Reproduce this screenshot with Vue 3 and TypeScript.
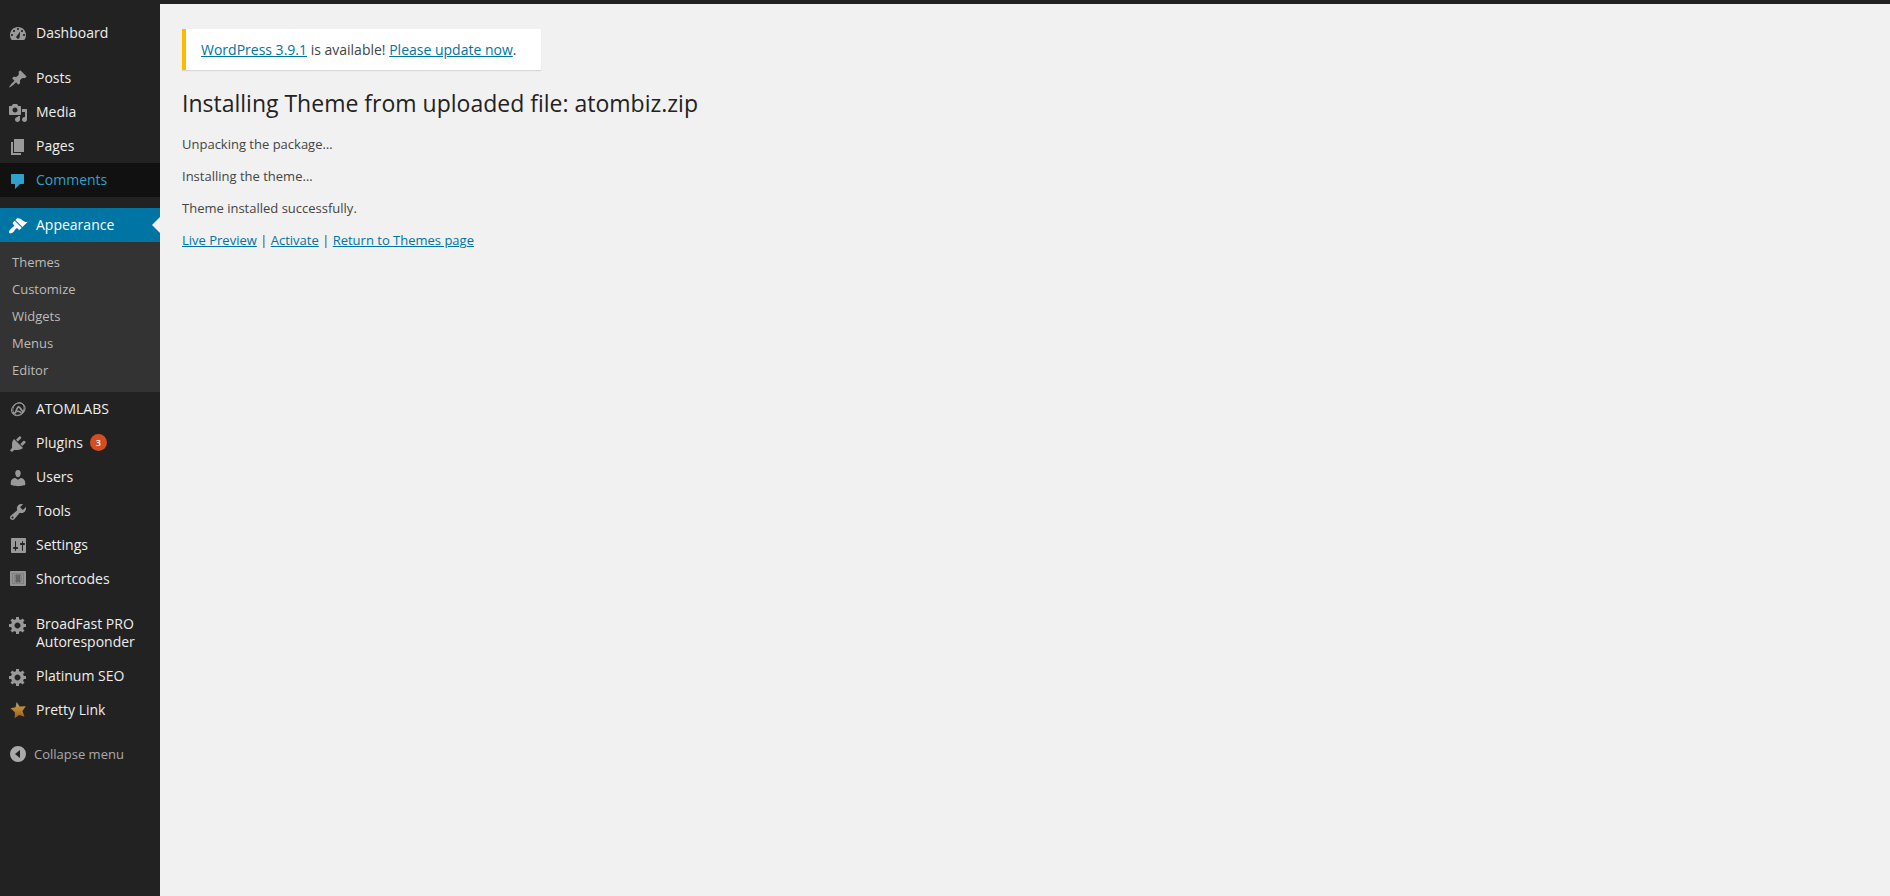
<script setup lang="ts">
interface MenuItem {
  label: string
  icon: string
  state?: 'hover' | 'current'
  badge?: number
  children?: string[]
  gapAfter?: boolean
}

const icons: Record<string, string> = {
  dashboard: 'M3.76 16h12.48c1.1-1.37 1.76-3.11 1.76-5 0-4.42-3.58-8-8-8s-8 3.58-8 8c0 1.89.66 3.63 1.76 5zM10 4c.55 0 1 .45 1 1s-.45 1-1 1-1-.45-1-1 .45-1 1-1zM6 6c.55 0 1 .45 1 1s-.45 1-1 1-1-.45-1-1 .45-1 1-1zm8 0c.55 0 1 .45 1 1s-.45 1-1 1-1-.45-1-1 .45-1 1-1zm-1.8 1.4L11.6 13c0 1-.7 1.8-1.6 1.8s-1.7-.8-1.7-1.7c0-.6.3-1.1.7-1.4zM4 10c.55 0 1 .45 1 1s-.45 1-1 1-1-.45-1-1 .45-1 1-1zm12 0c.55 0 1 .45 1 1s-.45 1-1 1-1-.45-1-1 .45-1 1-1z',
  posts: 'M10.44 3.02l1.82-1.82 6.36 6.35-1.83 1.82c-1.05-.68-2.48-.57-3.41.36l-.75.75c-.92.93-1.04 2.35-.35 3.41l-1.83 1.82-2.41-2.41-2.8 2.79c-.42.42-3.38 2.71-3.8 2.29s1.86-3.39 2.28-3.81l2.79-2.79L4.1 9.36l1.83-1.82c1.05.69 2.48.57 3.4-.36l.75-.75c.93-.92 1.05-2.35.36-3.41z',
  media: 'M13 11V4c0-.55-.45-1-1-1h-1.67L9 1H5L3.67 3H2c-.55 0-1 .45-1 1v7c0 .55.45 1 1 1h10c.55 0 1-.45 1-1zM7 4.5c1.38 0 2.5 1.12 2.5 2.5S8.38 9.5 7 9.5 4.5 8.38 4.5 7 5.62 4.5 7 4.5zM14 6h5v10.5c0 1.38-1.12 2.5-2.5 2.5S14 17.88 14 16.5s1.12-2.5 2.5-2.5c.17 0 .34.02.5.05V9h-3V6zm-4 8.05V13h2v3.5c0 1.38-1.12 2.5-2.5 2.5S7 17.88 7 16.5 8.12 14 9.5 14c.17 0 .34.02.5.05z',
  pages: 'M6 15V2h10v13H6zm-1 1h8v2H3V5h2v11z',
  comments: 'M4 3h11c.6 0 1 .4 1 1v8c0 .6-.4 1-1 1h-3l-5 5v-5H4c-.6 0-1-.4-1-1V4c0-.6.4-1 1-1z',
  appearance: 'M14.48 11.06L7.41 3.99l1.5-1.5c.5-.56 2.3-.47 3.51.32 1.21.8 1.43 1.28 2.91 2.1 1.18.64 2.45 1.26 4.45.85zm-.71.71L6.7 4.7 4.93 6.47c-.39.39-.39 1.02 0 1.41l1.06 1.06c.39.39.39 1.03 0 1.42-.6.6-1.43 1.11-2.21 1.69-.35.26-.7.53-1.01.84C1.43 14.23.4 16.08 1.4 17.07c.99 1 2.84-.03 4.18-1.36.31-.31.58-.66.85-1.02.57-.78 1.08-1.61 1.69-2.21.39-.39 1.02-.39 1.41 0l1.06 1.06c.39.39 1.02.39 1.41 0z',
  plugins: 'M13.11 4.36L9.87 7.6 8 5.73l3.24-3.24c.35-.34 1.05-.2 1.56.32.52.51.66 1.21.31 1.55zm-8 1.77l.91-1.12 9.01 9.01-1.19.84c-.71.71-2.63 1.16-3.82 1.16H6.14L4.9 17.26c-.59.59-1.54.59-2.12 0-.59-.58-.59-1.53 0-2.12l1.24-1.24v-3.88c0-1.13.4-3.19 1.09-3.89zm7.26 3.97l3.24-3.24c.34-.35 1.04-.21 1.55.31.52.51.66 1.21.31 1.55l-3.24 3.25z',
  users: 'M10 9.25c-2.27 0-2.73-3.44-2.73-3.44C7 4.02 7.82 2 9.97 2c2.16 0 2.98 2.02 2.71 3.81 0 0-.41 3.44-2.68 3.44zm0 2.57L12.72 10c2.39 0 4.52 2.33 4.52 4.53v2.49s-3.65 1.13-7.24 1.13c-3.65 0-7.24-1.13-7.24-1.13v-2.49c0-2.25 1.94-4.48 4.47-4.48z',
  tools: 'M16.68 9.77c-1.34 1.34-3.3 1.67-4.95.99l-5.41 6.52c-.99.99-2.59.99-3.58 0s-.99-2.59 0-3.57l6.52-5.42c-.68-1.65-.35-3.61.99-4.95 1.28-1.28 3.12-1.62 4.72-1.06l-2.89 2.89 2.82 2.82 2.86-2.87c.53 1.58.18 3.39-1.08 4.65zM3.81 16.21c.4.39 1.04.39 1.43 0 .4-.4.4-1.04 0-1.43-.39-.4-1.03-.4-1.43 0-.39.39-.39 1.03 0 1.43z',
  settings: 'M18 16V3c0-.55-.45-1-1-1H4c-.55 0-1 .45-1 1v13c0 .55.45 1 1 1h13c.55 0 1-.45 1-1zM8 11h1c.55 0 1 .45 1 1s-.45 1-1 1H8v1.5c0 .28-.22.5-.5.5s-.5-.22-.5-.5V13H6c-.55 0-1-.45-1-1s.45-1 1-1h1V5.5c0-.28.22-.5.5-.5s.5.22.5.5V11zm6-2h-1c-.55 0-1-.45-1-1s.45-1 1-1h1V5.5c0-.28.22-.5.5-.5s.5.22.5.5V7h1c.55 0 1 .45 1 1s-.45 1-1 1h-1v5.5c0 .28-.22.5-.5.5s-.5-.22-.5-.5V9z',
  gear: 'M18 12h-2.18c-.17.7-.44 1.35-.81 1.93l1.54 1.54-2.1 2.1-1.54-1.54c-.58.36-1.23.63-1.91.79V19H8v-2.18c-.68-.16-1.33-.43-1.91-.79l-1.54 1.54-2.12-2.12 1.54-1.54c-.36-.58-.63-1.23-.79-1.91H1V9.03h2.17c.16-.7.44-1.35.8-1.94L2.43 5.55l2.1-2.1 1.54 1.54c.58-.37 1.24-.64 1.93-.81V2h3v2.18c.68.16 1.33.43 1.91.79l1.54-1.54 2.12 2.12-1.54 1.54c.36.59.64 1.24.8 1.94H18V12zm-8.5 1.5c1.66 0 3-1.34 3-3s-1.34-3-3-3-3 1.34-3 3 1.34 3 3 3z',
}

const menu: MenuItem[] = [
  { label: 'Dashboard', icon: 'dashboard', gapAfter: true },
  { label: 'Posts', icon: 'posts' },
  { label: 'Media', icon: 'media' },
  { label: 'Pages', icon: 'pages' },
  { label: 'Comments', icon: 'comments', state: 'hover', gapAfter: true },
  {
    label: 'Appearance',
    icon: 'appearance',
    state: 'current',
    children: ['Themes', 'Customize', 'Widgets', 'Menus', 'Editor'],
  },
  { label: 'ATOMLABS', icon: 'atom' },
  { label: 'Plugins', icon: 'plugins', badge: 3 },
  { label: 'Users', icon: 'users' },
  { label: 'Tools', icon: 'tools' },
  { label: 'Settings', icon: 'settings' },
  { label: 'Shortcodes', icon: 'shortcodes', gapAfter: true },
  { label: 'BroadFast PRO Autoresponder', icon: 'gear' },
  { label: 'Platinum SEO', icon: 'gear' },
  { label: 'Pretty Link', icon: 'star' },
]

const progress: string[] = [
  'Unpacking the package…',
  'Installing the theme…',
  'Theme installed successfully.',
]
</script>

<template>
  <div class="admin">
    <header class="toolbar"></header>
    <div class="body">
      <nav class="sidebar" aria-label="Main menu">
        <ul class="menu">
          <li v-for="item in menu" :key="item.label" :class="['item', item.state, { gap: item.gapAfter }]">
            <a href="#" class="top">
              <svg class="icon" viewBox="0 0 20 20" aria-hidden="true">
                <g v-if="item.icon === 'atom'" fill="none" stroke="currentColor">
                  <ellipse cx="10.3" cy="9.3" rx="7.2" ry="6" transform="rotate(-35 10.3 9.3)" stroke-width="0.9" />
                  <ellipse cx="10.5" cy="9" rx="6.4" ry="5.4" transform="rotate(-60 10.5 9)" stroke-width="0.9" />
                  <path d="M4.2 13.2l3.2-.4C8.600 10 9.200 7 10.600 6.800c1.600 0 2.400 3.400 5 5.600" stroke-width="1.7" />
                  <path d="M8.500 11.600c1.600-.8 3.200-.4 4.800 1.400" stroke-width="1.400" />
                </g>
                <g v-else-if="item.icon === 'shortcodes'">
                  <rect x="2" y="1" width="16" height="15" rx="1" fill="#959595" />
                  <path d="M7.500 3.500h-3v10h3M12.500 3.500h3v10h-3" fill="none" stroke="#7c7c7c" />
                  <path d="M9 3v2H7v7h2v2M11 3v2h2v7h-2v2" fill="none" stroke="#6c6c6c" />
                  <rect x="8" y="5" width="4" height="7" fill="#626262" />
                </g>
                <g v-else-if="item.icon === 'star'">
                  <defs>
                    <linearGradient id="star-fill" x1="0" y1="0" x2="0" y2="1">
                      <stop offset="0" stop-color="#b7a06a" />
                      <stop offset="0.5" stop-color="#b9832f" />
                      <stop offset="1" stop-color="#9a5a10" />
                    </linearGradient>
                  </defs>
                  <path d="M8.700 1l2.900 4.600 6.200-.4-3.300 4.800 2 5.700-5.300-1.800-4.500 3.300.2-6L2.500 7.300l5-1.100z" fill="url(#star-fill)" />
                </g>
                <path v-else :d="icons[item.icon]" fill="currentColor" fill-rule="evenodd" />
              </svg>
              <span class="name">{{ item.label }}<span v-if="item.badge" class="badge">{{ item.badge }}</span></span>
            </a>
            <ul v-if="item.children" class="submenu">
              <li v-for="child in item.children" :key="child">
                <a href="#">{{ child }}</a>
              </li>
            </ul>
          </li>
        </ul>
        <button type="button" class="collapse">
          <svg class="icon" viewBox="0 0 20 20" aria-hidden="true">
            <path d="M10 2a8 8 0 1 0 0 16 8 8 0 0 0 0-16zm2 4v8l-5-4z" fill="currentColor" fill-rule="evenodd" />
          </svg>
          <span>Collapse menu</span>
        </button>
      </nav>
      <main class="content">
        <div class="notice">
          <a href="#">WordPress 3.9.1</a> is available! <a href="#">Please update now</a>.
        </div>
        <h1>Installing Theme from uploaded file: atombiz.zip</h1>
        <p v-for="line in progress" :key="line">{{ line }}</p>
        <p><a href="#">Live Preview</a> | <a href="#">Activate</a> | <a href="#">Return to Themes page</a></p>
      </main>
    </div>
  </div>
</template>

<style>
body {
  margin: 0;
  background: #f1f1f1;
}
</style>

<style scoped>
.admin {
  display: flex;
  flex-direction: column;
  min-height: 100vh;
  font-family: "Open Sans", sans-serif;
  font-size: 13px;
  line-height: 20px;
  color: #444;
}

.toolbar {
  height: 4px;
  background: #222;
}

.body {
  display: flex;
  flex: 1;
}

.sidebar {
  flex: none;
  box-sizing: border-box;
  width: 160px;
  padding-top: 12px;
  background: #222;
}

ul {
  margin: 0;
  padding: 0;
  list-style: none;
}

.item.gap {
  margin-bottom: 11px;
}

.top {
  position: relative;
  display: flex;
  gap: 8px;
  padding: 8px 16px 8px 8px;
  font-size: 14px;
  line-height: 18px;
  color: #eee;
  text-decoration: none;
}

.icon {
  flex: none;
  width: 20px;
  height: 20px;
  margin-bottom: -2px;
  color: #999;
}

.hover .top {
  background: #111;
}

.hover .top,
.hover .icon {
  color: #2ea2cc;
}

.current .top {
  background: #0074a2;
}

.current .top,
.current .icon {
  color: #fff;
}

.current .top::after {
  content: "";
  position: absolute;
  top: 50%;
  right: 0;
  margin-top: -8px;
  border: 8px solid transparent;
  border-left-width: 0;
  border-right-color: #f1f1f1;
}

.badge {
  display: inline-block;
  min-width: 17px;
  margin-left: 7px;
  border-radius: 9px;
  background: #d54e21;
  color: #fff;
  font-size: 9px;
  font-weight: 600;
  line-height: 17px;
  text-align: center;
  vertical-align: top;
}

.submenu {
  padding: 7px 0 8px;
  background: #333;
}

.submenu a {
  display: block;
  padding: 4px 12px 5px;
  line-height: 18px;
  color: #bbb;
  text-decoration: none;
}

.collapse {
  display: flex;
  align-items: center;
  gap: 6px;
  width: 100%;
  height: 34px;
  margin-top: 10px;
  padding: 0 8px;
  border: 0;
  background: none;
  color: #aaa;
  font: inherit;
  text-align: left;
}

.collapse .icon {
  margin-bottom: 0;
  color: #aaa;
}

.content {
  flex: 1;
  min-width: 0;
  padding: 25px 20px 20px 22px;
}

.content a {
  color: #0074a2;
}

.notice {
  width: fit-content;
  padding: 11px 25px 10px 15px;
  border-left: 4px solid #ffba00;
  background: #fff;
  box-shadow: 0 1px 1px rgba(0, 0, 0, 0.1);
  font-size: 14px;
}

h1 {
  margin: 18px 0 16px;
  font-size: 23px;
  font-weight: 400;
  line-height: 30px;
  color: #222;
}

p {
  margin: 0 0 12px;
}
</style>
